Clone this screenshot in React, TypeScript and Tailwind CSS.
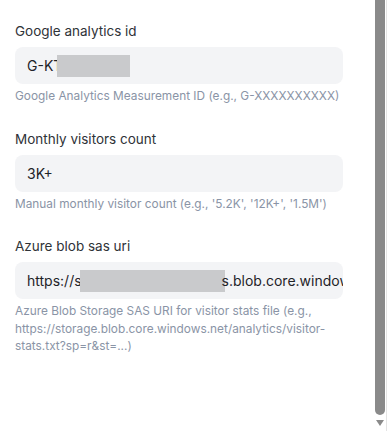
const fieldText = 'text-[14px] text-[#1f2328]';

function Redacted({ width }: { width: number }) {
  return (
    <span
      className="inline-block shrink-0 h-[22px] align-middle bg-[#c9cacc]"
      style={{ width }}
    />
  );
}

function Field({
  label,
  help,
  children,
}: {
  label: string;
  help: string;
  children: React.ReactNode;
}) {
  return (
    <div className="flex flex-col min-w-0">
      <label className="text-[13.5px] leading-5 text-[#2f3338]">{label}</label>
      <div
        className={`mt-[6px] h-[37px] min-w-0 rounded-lg bg-[#f3f4f6] px-3 flex items-center overflow-hidden whitespace-nowrap ${fieldText}`}
      >
        {children}
      </div>
      <p className="mt-[4px] text-[11.85px] leading-[17.5px] text-[#8a94a6]">{help}</p>
    </div>
  );
}

export default function App() {
  return (
    <div
      className="w-[387px] h-[431px] bg-white flex overflow-hidden"
      style={{ fontFamily: 'Inter, "Noto Sans", sans-serif' }}
    >
      <div className="flex-1 min-w-0 pl-[15px] pr-[29px] pt-[21px] flex flex-col gap-[23px]">
        <Field
          label="Google analytics id"
          help="Google Analytics Measurement ID (e.g., G-XXXXXXXXXX)"
        >
          <span className="shrink-0">G-KT</span>
          <span className="-ml-[5px] flex items-center shrink-0">
            <Redacted width={73} />
          </span>
        </Field>

        <Field
          label="Monthly visitors count"
          help="Manual monthly visitor count (e.g., '5.2K', '12K+', '1.5M')"
        >
          <span>3K+</span>
        </Field>

        <Field
          label="Azure blob sas uri"
          help="Azure Blob Storage SAS URI for visitor stats file (e.g., https://storage.blob.core.windows.net/analytics/visitor-stats.txt?sp=r&st=...)"
        >
          <span className="shrink-0">https://s</span>
          <span className="-ml-[2px] flex items-center shrink-0">
            <Redacted width={145} />
          </span>
          <span className="-ml-[3px] shrink-0">s.blob.core.windows.net/analytics</span>
        </Field>
      </div>

      {/* scrollbar */}
      <div className="w-[15px] shrink-0 h-full flex flex-col items-center pl-[1px] border-r border-[#e4e4e4]">
        <div className="w-[10px] flex-1 bg-[#8a8a8a] rounded-b-[5px]" />
        <div className="h-[16px] flex items-center justify-center">
          <svg width="8" height="6" viewBox="0 0 8 6">
            <path d="M0 0 L8 0 L4 6 Z" fill="#8a8a8a" />
          </svg>
        </div>
      </div>
    </div>
  );
}
